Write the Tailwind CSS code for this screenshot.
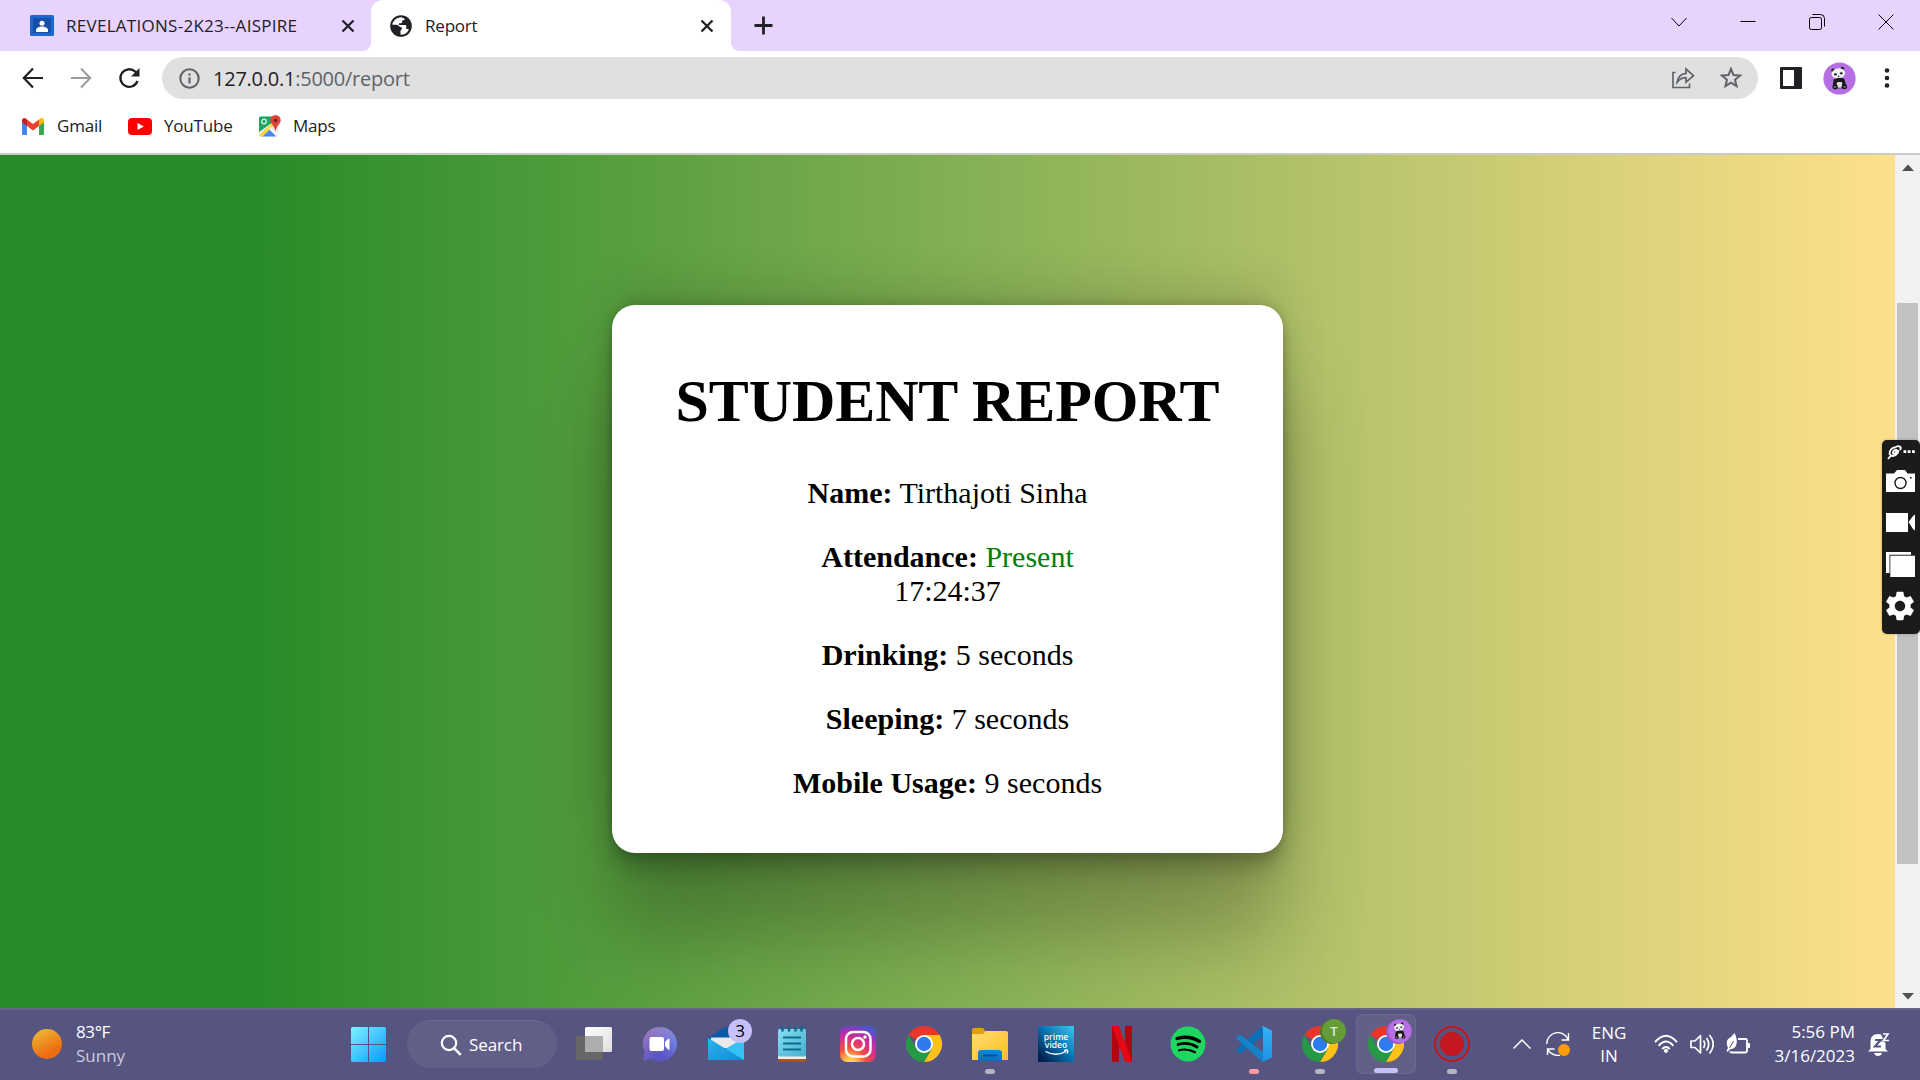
<!DOCTYPE html>
<html lang="en">
<head>
<meta charset="utf-8">
<title>Report</title>
<script src="https://cdn.jsdelivr.net/npm/@tailwindcss/browser@4"></script>
</head>
<body class="w-[1920px] h-[1080px] overflow-hidden flex flex-col bg-white font-['Open_Sans',sans-serif] text-[#202124]">

<svg class="absolute w-0 h-0" aria-hidden="true">
  <defs>
    <linearGradient id="sun" x1="0.2" y1="0" x2="0.7" y2="1"><stop offset="0" stop-color="#edba35"/><stop offset="0.8" stop-color="#ee6c10"/></linearGradient>
    <linearGradient id="win" x1="0" y1="0" x2="1" y2="1"><stop offset="0" stop-color="#7cf3ff"/><stop offset="1" stop-color="#0a97ff"/></linearGradient>
    <linearGradient id="chat" x1="0" y1="1" x2="1" y2="0"><stop offset="0.35" stop-color="#5b54c4"/><stop offset="0.65" stop-color="#6b72d8"/><stop offset="1" stop-color="#7aa0f0"/></linearGradient>
    <linearGradient id="chat2" x1="0" y1="0" x2="0.6" y2="0.7"><stop offset="0" stop-color="#a77fb8"/><stop offset="1" stop-color="#a77fb8" stop-opacity="0"/></linearGradient>
    <linearGradient id="mailB" x1="0" y1="0" x2="1" y2="1"><stop offset="0" stop-color="#2ab5ee"/><stop offset="1" stop-color="#1488d8"/></linearGradient>
    <linearGradient id="note" x1="0" y1="0" x2="1" y2="1"><stop offset="0" stop-color="#86dff5"/><stop offset="1" stop-color="#45aecd"/></linearGradient>
    <radialGradient id="ig" cx="0.28" cy="1.05" r="1.1"><stop offset="0" stop-color="#ffdd70"/><stop offset="0.15" stop-color="#fec053"/><stop offset="0.4" stop-color="#f5503f"/><stop offset="0.65" stop-color="#d62f8a"/><stop offset="0.85" stop-color="#a030b8"/><stop offset="1" stop-color="#4a55d0"/></radialGradient>
    <linearGradient id="fold" x1="0" y1="0" x2="1" y2="1"><stop offset="0" stop-color="#ffdc72"/><stop offset="1" stop-color="#fdbf1f"/></linearGradient>
    <linearGradient id="foldB" x1="0" y1="0" x2="0" y2="1"><stop offset="0" stop-color="#1587d8"/><stop offset="1" stop-color="#0d6cbd"/></linearGradient>
    <linearGradient id="prime" x1="0" y1="1" x2="1" y2="0"><stop offset="0.1" stop-color="#01224f"/><stop offset="0.55" stop-color="#0878b5"/><stop offset="1" stop-color="#37cbf0"/></linearGradient>
    <linearGradient id="tv" x1="0" y1="0" x2="1" y2="1"><stop offset="0" stop-color="#ffffff"/><stop offset="1" stop-color="#dedede"/></linearGradient>
    <linearGradient id="vs" x1="0" y1="0" x2="0" y2="1"><stop offset="0" stop-color="#35b2f5"/><stop offset="1" stop-color="#1d93e6"/></linearGradient>
    <symbol id="chrome" viewBox="0 0 36 36">
      <path d="M18 18 L2.4 9 A18 18 0 0 1 33.6 9 Z" fill="#e8362b"/>
      <path d="M18 9 H33.6 A18 18 0 0 1 18 36 L25.8 22.5 Z" fill="#fcc217"/>
      <path d="M2.4 9 A18 18 0 0 0 18 36 L25.8 22.5 L10.2 22.5 Z" fill="#279845"/>
      <circle cx="18" cy="18" r="9" fill="#fff"/><circle cx="18" cy="18" r="7.2" fill="#2f7bee"/>
    </symbol>
    <symbol id="panda" viewBox="0 0 34 34">
      <circle cx="17" cy="17" r="16.6" fill="#b66fe3"/>
      <circle cx="10.5" cy="8.6" r="2" fill="#222"/><circle cx="20" cy="6.8" r="1.9" fill="#222"/>
      <ellipse cx="15.8" cy="11.8" rx="7" ry="5.2" fill="#f1f1f1" transform="rotate(-10 15.8 11.8)"/>
      <ellipse cx="12.8" cy="12.8" rx="1.6" ry="1.1" fill="#222"/><ellipse cx="18.8" cy="11.7" rx="1.6" ry="1.1" fill="#222"/>
      <circle cx="16" cy="14.6" r=".8" fill="#222"/>
      <path d="M11 18 Q17 14.5 22 17.5 L23.8 24 L21.5 27 H12 L10.2 23 Z" fill="#191919"/>
      <rect x="14.2" y="20.5" width="5.6" height="6" rx="1.5" fill="#dedede"/>
      <circle cx="12.5" cy="25.5" r="2.7" fill="#151515"/><circle cx="22" cy="25.3" r="2.7" fill="#151515"/>
      <circle cx="12.3" cy="25.8" r="1" fill="#999"/><circle cx="22.2" cy="25.6" r="1" fill="#999"/>
    </symbol>
  </defs>
</svg>

<!-- Tab strip -->
<header class="h-[51px] shrink-0 flex bg-[#e8d3ff]">
  <div class="w-[371px] h-full flex items-center pl-[30px] pr-[16px]">
    <svg class="w-6 h-[22px]" viewBox="0 0 24 22"><rect width="24" height="21" rx="1.5" fill="#1b67d3"/><rect x="3" y="3" width="18" height="15" fill="#184fa8"/><circle cx="12" cy="8.2" r="2.5" fill="#fff"/><path d="M6 17v-1.8c0-2.2 3.5-3.6 6-3.6s6 1.4 6 3.6V17z" fill="#fff"/></svg>
    <span class="ml-[12px] text-[17px] leading-6 tracking-[0.28px] whitespace-nowrap">REVELATIONS-2K23--AISPIRE</span>
    <svg class="ml-auto w-[14px] h-[14px]" viewBox="0 0 14 14"><path d="M1.5 1.5l11 11M12.5 1.5l-11 11" stroke="#202124" stroke-width="2.3" fill="none"/></svg>
  </div>
  <div class="relative w-[360px] h-full flex items-center pl-[19px] pr-[17px] bg-white rounded-t-[12px]">
    <svg class="absolute -left-[9px] bottom-0 w-[9px] h-[10px]" viewBox="0 0 9 10"><path d="M9 0v10H0C6 10 9 6 9 0z" fill="#fff"/></svg>
    <svg class="absolute -right-[9px] bottom-0 w-[9px] h-[10px]" viewBox="0 0 9 10"><path d="M0 0v10h9C3 10 0 6 0 0z" fill="#fff"/></svg>
    <svg class="w-[22px] h-[22px]" viewBox="0 0 22 22"><circle cx="11" cy="11" r="9.8" fill="#fff" stroke="#202124" stroke-width="2"/><path d="M12 1.5c5.500 .3 9 4.500 9 9.500 0 1.500-.3 3-.9 4-1-.2-1.300-1.100-2.600-1.100h-1.200v-2.600c0-.8-.6-1.300-1.300-1.300H9V8.200h2c.7 0 1.200-.5 1.200-1.200V5.300h1.600c.7 0 1-.6.800-1.200C14.200 3 12.500 3.200 12 1.500z" fill="#202124"/><path d="M1.600 9.600L3 9.800l3 0c2 0 3 1.200 3.600 2 .6.700 2.400.3 2.400 1.800 0 1.200-1.500 1.200-1.500 2.500v4.500C5 20.500 1 16 1.600 9.600z" fill="#202124"/></svg>
    <span class="ml-[13px] text-[17px] leading-6 tracking-[-0.2px]">Report</span>
    <svg class="ml-auto w-[14px] h-[14px]" viewBox="0 0 14 14"><path d="M1.500 1.500l11 11M12.500 1.500l-11 11" stroke="#202124" stroke-width="2.300" fill="none"/></svg>
  </div>
  <div class="flex items-center pl-[23px]">
    <svg class="w-[19px] h-[19px]" viewBox="0 0 19 19"><path d="M9.500 .5v18M.5 9.500h18" stroke="#202124" stroke-width="2.800"/></svg>
  </div>
  <div class="ml-auto flex h-[43px] items-center">
    <div class="w-[69px] flex justify-center"><svg class="w-[16px] h-[16px]" viewBox="0 0 16 16"><path d="M.5 4l7.500 8L15.500 4" fill="none" stroke="#000" stroke-width="1"/></svg></div>
    <div class="w-[69px] flex justify-center"><svg class="w-[16px] h-[16px]" viewBox="0 0 16 16"><path d="M.5 7.500h15" stroke="#000" stroke-width="1"/></svg></div>
    <div class="w-[69px] flex justify-center"><svg class="w-[16px] h-[16px]" viewBox="0 0 16 16"><rect x=".5" y="3.500" width="12" height="12" rx="1.800" fill="none" stroke="#000" stroke-width="1"/><path d="M3.500 .5h8q4 0 4 4v8" fill="none" stroke="#000" stroke-width="1"/></svg></div>
    <div class="w-[69px] flex justify-center"><svg class="w-[16px] h-[16px]" viewBox="0 0 16 16"><path d="M.6.6l14.800 14.800M15.400.6L.6 15.400" stroke="#000" stroke-width="1"/></svg></div>
  </div>
</header>

<!-- Toolbar -->
<nav class="h-[54px] shrink-0 flex items-center pl-[22px]">
  <svg class="w-[22px] h-[22px]" viewBox="0 0 22 22"><path d="M21 11H2.500M11 1.500L1.800 11l9.200 9.500" fill="none" stroke="#202124" stroke-width="2.200"/></svg>
  <svg class="ml-[26px] w-[22px] h-[22px]" viewBox="0 0 22 22"><path d="M1 11h18.500M11 1.500l9.200 9.500-9.200 9.500" fill="none" stroke="#9b9b9b" stroke-width="2"/></svg>
  <svg class="ml-[26px] w-[22px] h-[22px]" viewBox="0 0 22 22"><path d="M19.500 14a8.800 8.800 0 1 1-2.200-9.300l2 2" fill="none" stroke="#202124" stroke-width="2.300"/><path d="M21.500 1v8.500H13z" fill="#202124"/></svg>
  <div class="ml-[22px] w-[1596px] h-[42px] rounded-full bg-[#e0e0e0] flex items-center pl-[17px] pr-[15px]">
    <svg class="w-[21px] h-[21px]" viewBox="0 0 21 21"><circle cx="10.500" cy="10.500" r="9.200" fill="none" stroke="#5f6368" stroke-width="2.100"/><path d="M10.500 9.300v6.200" stroke="#5f6368" stroke-width="2.200"/><rect x="9.400" y="5.400" width="2.200" height="2.200" fill="#5f6368"/></svg>
    <span class="ml-[13px] pt-[2px] text-[20px] leading-7 tracking-[-0.24px] whitespace-nowrap">127.0.0.1<span class="text-[#5f6368]">:5000/report</span></span>
    <svg class="ml-auto w-[24px] h-[22px]" viewBox="0 0 24 22"><path d="M4.500 5.500H2v15h16.500v-4" fill="none" stroke="#5f6368" stroke-width="1.700"/><path d="M6 15.500c.8-6 4-8.700 9-9.200V2l7.500 6.700L15 15.200v-4.500c-4 0-6.500 1.500-9 4.800z" fill="none" stroke="#5f6368" stroke-width="1.700"/></svg>
    <svg class="ml-[24px] w-[24px] h-[24px]" viewBox="0 0 24 24"><path d="M12 3l2.500 6.100 6.600.5-5.100 4.200 1.600 6.400-5.600-3.500-5.600 3.500L8 13.800 2.900 9.600l6.600-.5z" fill="none" stroke="#5f6368" stroke-width="2"/></svg>
  </div>
  <svg class="ml-[22px] w-[22px] h-[22px]" viewBox="0 0 22 22"><rect width="22" height="22" rx="1" fill="#202124"/><rect x="3" y="3" width="11" height="16" fill="#fff"/></svg>
  <svg class="ml-[21px] w-[33px] h-[33px]"><use href="#panda"/></svg>
  <svg class="ml-[28px] w-[6px] h-[22px]" viewBox="0 0 6 22"><circle cx="3" cy="3.500" r="2.300" fill="#202124"/><circle cx="3" cy="11" r="2.300" fill="#202124"/><circle cx="3" cy="18.500" r="2.300" fill="#202124"/></svg>
</nav>

<!-- Bookmarks bar -->
<div class="h-[50px] shrink-0 flex items-start pl-[22px] pt-[9px] border-b-2 border-[#cacaca] text-[17px] leading-6 tracking-[-0.2px]">
  <div class="flex items-center h-6 w-[106px] gap-[13px]">
    <svg class="w-[22px] h-[17px]" viewBox="0 0 22 17"><path d="M0 2.500V15.500Q0 17 1.500 17H5V7z" fill="#4285f4"/><path d="M22 2.500V15.500Q22 17 20.500 17H17V7z" fill="#34a853"/><path d="M17 1.500V8l5-3.800V2.600C22 .3 19.500-.7 17.800.7z" fill="#fbbc04"/><path d="M5 8V1.500l6 4.600 6-4.600V8l-6 4.600z" fill="#ea4335"/><path d="M0 2.600V4.200L5 8V1.500L4.200.7C2.500-.7 0 .3 0 2.600z" fill="#c5221f"/></svg>
    <span>Gmail</span>
  </div>
  <div class="flex items-center h-6 w-[131px] gap-[12px]">
    <svg class="w-[24px] h-[17px]" viewBox="0 0 24 17"><rect width="24" height="17" rx="4" fill="#f00"/><path d="M9.500 5v7l6.300-3.500z" fill="#fff"/></svg>
    <span>YouTube</span>
  </div>
  <div class="flex items-center h-6 gap-[12px]">
    <svg class="w-[22px] h-[22px]" viewBox="0 0 22 22"><rect y="1.500" width="19" height="20" rx="1.500" fill="#e8e8e8"/><path d="M0 17V3Q0 1.500 1.500 1.500H13L14 7z" fill="#1fa463"/><path d="M3 21.500l7-7.500 7.500 7.500z" fill="#4489f5"/><path d="M0 20.500L14.500 6.500l2.500 2L3.500 21.500H1z" fill="#fdd835"/><path d="M10 14l2-2 7 7v2h-2z" fill="#f4f4f4"/><circle cx="5" cy="6.500" r="2.300" fill="none" stroke="#e6f4ea" stroke-width="1.200"/><path d="M16.500 0A5.200 5.200 0 0 0 11.300 5.200c0 3.500 4 5 5.200 11 1.200-6 5.200-7.500 5.200-11A5.200 5.200 0 0 0 16.500 0z" fill="#dc4437"/><circle cx="16.500" cy="5.300" r="1.900" fill="#7c231c"/></svg>
    <span>Maps</span>
  </div>
</div>

<!-- Page viewport -->
<main class="relative h-[853px] shrink-0 flex">
  <div class="w-[1895px] h-full pt-[150px] flex items-start justify-center overflow-hidden bg-[linear-gradient(to_right,#268b28_13%,#ffe08c_100%)]">
    <section class="w-[671px] h-[548px] pt-[62px] rounded-[23px] bg-white text-center text-black font-['Liberation_Serif',serif] text-[30px] leading-[34px] shadow-[0_81px_82px_rgba(0,0,0,0.25),0_-18px_45px_rgba(0,0,0,0.12),0_6px_9px_rgba(0,0,0,0.12),0_18px_20px_rgba(0,0,0,0.17),0_-5px_8px_rgba(0,0,0,0.09)]">
      <h1 class="text-[60px] leading-[68px] font-bold mb-[41px] tracking-[-0.1px]">STUDENT REPORT</h1>
      <div class="flex flex-col gap-[30px]">
        <p><b>Name:</b> Tirthajoti Sinha</p>
        <p><b>Attendance:</b> <span class="text-[#008000]">Present</span><br>17:24:37</p>
        <p><b>Drinking:</b> 5 seconds</p>
        <p><b>Sleeping:</b> 7 seconds</p>
        <p><b>Mobile Usage:</b> 9 seconds</p>
      </div>
    </section>
  </div>
  <div class="w-[25px] h-full bg-[#f1f1f1] flex flex-col items-center">
    <svg class="mt-[9px] w-[12px] h-[7px]" viewBox="0 0 12 7"><path d="M0 7L6 .5 12 7z" fill="#505050"/></svg>
    <div class="mt-[132px] w-[21px] h-[561px] bg-[#c1c1c1]"></div>
    <svg class="mt-auto mb-[8px] w-[12px] h-[7px]" viewBox="0 0 12 7"><path d="M0 0l6 6.500L12 0z" fill="#505050"/></svg>
  </div>
  <!-- Floating capture panel -->
  <aside class="absolute right-0 top-[285px] w-[38px] h-[194px] rounded-[5px] bg-[#1b1b1b] flex flex-col items-center pt-[5px] pr-[2px] shadow-[0_0_3px_rgba(0,0,0,0.25)]">
    <svg class="w-[29px] h-[15px]" viewBox="0 0 29 15"><path d="M2 14L5 10.500M4 10C2.500 6 6 2 10 2.200M4.500 10.500c4 1.500 8-1.500 8-5.500M10 2c3-2 6 0 4 3M7 8.500c2.500.5 3.500-1 3.500-3.500-2 0-4 1-3.500 3.500z" fill="none" stroke="#fff" stroke-width="1.900"/><path d="M17.500 5.200h2.800v2.800h-2.800zM21.700 5.200h2.800v2.800h-2.800zM26 5.200h2.800v2.800H26z" fill="#fff"/></svg>
    <svg class="mt-[10px] w-[29px] h-[22px]" viewBox="0 0 29 22"><path d="M0 3.500h8L11 0h8l2.500 3.500H29V22H0z" fill="#fff"/><circle cx="14.500" cy="13" r="5.500" fill="none" stroke="#1b1b1b" stroke-width="1.400"/><rect x="24" y="7" width="1.600" height="1.600" fill="#1b1b1b"/></svg>
    <svg class="mt-[21px] w-[29px] h-[19px]" viewBox="0 0 29 19"><path d="M0 0h22v19H0zM22.500 9L27 3l2-1.500v16L27 16z" fill="#fff"/></svg>
    <svg class="mt-[20px] w-[29px] h-[25px]" viewBox="0 0 29 25"><path d="M0 0h25v2.700H3.500V21H0z" fill="#fff"/><rect x="4.300" y="3.700" width="24.700" height="21.300" fill="#fff"/></svg>
    <svg class="mt-[12px] w-[34px] h-[34px]" viewBox="0 0 24 24"><path fill="#fff" d="M19.430 12.980c.04-.32.070-.64.070-.98s-.03-.66-.07-.98l2.110-1.650c.19-.15.240-.42.120-.64l-2-3.460c-.12-.22-.39-.3-.61-.22l-2.490 1c-.52-.4-1.080-.73-1.690-.98l-.38-2.650C14.460 2.180 14.250 2 14 2h-4c-.25 0-.46.180-.49.420l-.38 2.650c-.61.250-1.170.590-1.690.98l-2.490-1c-.23-.09-.49 0-.61.220l-2 3.460c-.13.220-.07.490.12.640l2.110 1.650c-.04.320-.07.650-.07.980s.03.660.070.980l-2.110 1.650c-.19.150-.24.420-.12.640l2 3.460c.12.220.390.300.610.220l2.490-1c.52.400 1.080.730 1.690.980l.38 2.650c.03.240.240.420.490.420h4c.25 0 .46-.18.490-.42l.38-2.650c.61-.25 1.170-.59 1.690-.98l2.490 1c.23.090.490 0 .61-.22l2-3.460c.12-.22.070-.49-.12-.64l-2.110-1.650zM12 15.700c-2.040 0-3.700-1.660-3.700-3.700s1.660-3.700 3.700-3.700 3.700 1.660 3.700 3.700-1.660 3.700-3.700 3.700z"/></svg>
  </aside>
</main>

<!-- Taskbar -->
<footer class="h-[72px] shrink-0 flex items-center bg-[#565480] border-t-2 border-[#656383] pb-[2px] text-white">
  <div class="w-[335px] flex items-center pl-[32px]">
    <svg class="w-[30px] h-[31px]" viewBox="0 0 30 31"><circle cx="15" cy="15" r="15" fill="url(#sun)"/></svg>
    <div class="ml-[14px] text-[17px] leading-6">
      <div class="tracking-[-0.4px]">83°F</div>
      <div class="text-[#cccbdb]">Sunny</div>
    </div>
  </div>
  <div class="w-[72px] pl-4">
    <svg class="w-[35px] h-[35px]" viewBox="0 0 35 35"><path d="M1.500 0H17v17H0V1.500Q0 0 1.500 0zM18 0h15.500Q35 0 35 1.500V17H18zM0 18h17v17H1.500Q0 35 0 33.500zM18 18h17v15.500q0 1.500-1.500 1.500H18z" fill="url(#win)"/></svg>
  </div>
  <div class="w-[150px] h-12 rounded-full bg-[#615f87] border-t border-[#6d6b90] flex items-center pl-[33px]">
    <svg class="w-[22px] h-[22px]" viewBox="0 0 22 22"><circle cx="9" cy="9" r="7.200" fill="none" stroke="#fff" stroke-width="2.200"/><path d="M14 14.200l6 6" stroke="#fff" stroke-width="2.600" stroke-linecap="round"/></svg>
    <span class="ml-[7px] text-[17px] leading-6 tracking-[-0.1px]">Search</span>
  </div>
  <div class="ml-1 flex items-center h-[60px]">
    <div class="w-[66px] flex justify-center"><svg class="w-9 h-9" viewBox="0 0 36 36"><rect x="9" y="1" width="27" height="25" rx="1.500" fill="url(#tv)"/><rect x="0" y="10" width="27" height="24" rx="1.500" fill="#666"/><path d="M9 10h18v16H9z" fill="#adadad"/></svg></div>
    <div class="w-[66px] flex justify-center"><svg class="w-9 h-9" viewBox="0 0 36 36"><path d="M18 1a17 17 0 1 1-8.500 31.700L1 35l1.500-9.500A17 17 0 0 1 18 1z" fill="url(#chat)"/><path d="M18 1a17 17 0 1 1-8.500 31.700L1 35l1.500-9.500A17 17 0 0 1 18 1z" fill="url(#chat2)"/><rect x="7.500" y="11" width="14.500" height="14" rx="2" fill="#fff"/><path d="M23 16l3.300-3.300h1.200v11h-1.200L23 20z" fill="#fff"/></svg></div>
    <div class="relative w-[66px] flex justify-center"><svg class="w-9 h-9" viewBox="0 0 36 36"><path d="M0 12L17 1h3L36 12v8H0z" fill="#0b5aa8"/><path d="M3 11.500h31V22H3z" fill="#e9e9e9"/><path d="M0 12l18 12v10H0z" fill="#1fa2e6"/><path d="M36 12L18 22.500 10 28v6h26z" fill="#35c3f4"/><path d="M0 12l36 22H0z" fill="url(#mailB)"/></svg>
      <span class="absolute left-[35px] -top-[7px] w-6 h-6 rounded-full bg-[#c5c0f7] text-black text-[17px] leading-6 text-center">3</span></div>
    <div class="w-[66px] flex justify-center"><svg class="w-9 h-9" viewBox="0 0 36 36"><rect x="4" y="29" width="28" height="6.500" rx="1" fill="#b4520f"/><rect x="4" y="27" width="28" height="6" fill="#f0eeee"/><rect x="4" y="3" width="28" height="27.500" rx="1.500" fill="url(#note)"/><path d="M8.500 1.500v3M15 1.500v3M21.500 1.500v3M27.500 1.500v3" stroke="#0d6b8c" stroke-width="2.600" stroke-linecap="round"/><path d="M9 11.500h18M9 17.500h18M9 23.500h18" stroke="#0a6c8e" stroke-width="2"/></svg></div>
    <div class="w-[66px] flex justify-center"><svg class="w-9 h-9" viewBox="0 0 36 36"><rect width="36" height="36" rx="7" fill="url(#ig)"/><rect x="6" y="6" width="24.500" height="24.500" rx="7" fill="none" stroke="#fff" stroke-width="2.500"/><circle cx="18" cy="18" r="6" fill="none" stroke="#fff" stroke-width="2.500"/><circle cx="25" cy="11" r="1.700" fill="#fff"/></svg></div>
    <div class="w-[66px] flex justify-center"><svg class="w-9 h-9"><use href="#chrome"/></svg></div>
    <div class="relative w-[66px] flex justify-center"><svg class="w-9 h-9" viewBox="0 0 36 36"><path d="M0 4Q0 2 2 2h9l3 3.500V12H0z" fill="#e09f0c"/><path d="M0 8h11l3-3h20q2 0 2 2v27H0z" fill="url(#fold)"/><path d="M6 35v-8q0-3 3-3h18q3 0 3 3v8z" fill="url(#foldB)"/><path d="M11 29.500h14" stroke="#0a4f90" stroke-width="1.800"/></svg>
      <span class="absolute left-[28px] -bottom-[12px] w-[10px] h-[5px] rounded-full bg-[#b5b4c5]"></span></div>
    <div class="w-[66px] flex justify-center"><svg class="w-9 h-9" viewBox="0 0 36 36"><rect width="36" height="36" fill="url(#prime)"/><text x="18" y="13.500" text-anchor="middle" font-family="Open Sans" font-weight="600" font-size="8.500" fill="#fff">prime</text><text x="18" y="21.700" text-anchor="middle" font-family="Open Sans" font-weight="600" font-size="8.500" fill="#fff">video</text><path d="M7.500 25.500q10.500 5.500 20.500 0M29 27.500q1-2 .5-3.300-1.500-.5-3.500.5" fill="none" stroke="#fff" stroke-width="1.400"/></svg></div>
    <div class="w-[66px] flex justify-center"><svg class="w-9 h-9" viewBox="0 0 36 36"><path d="M8 0h7v35.500L8 36z" fill="#b20710"/><path d="M21 0h7v36l-7-.5z" fill="#b20710"/><path d="M8 0h7l13 36-7.200-.6z" fill="#e50914"/></svg></div>
    <div class="w-[66px] flex justify-center"><svg class="w-9 h-9" viewBox="0 0 36 36"><circle cx="18" cy="18" r="17.500" fill="#1ed760"/><path d="M7 12.500q12-3.500 22.500 2.800" fill="none" stroke="#000" stroke-width="3.300" stroke-linecap="round"/><path d="M8 18.500q10-3 19 2.500" fill="none" stroke="#000" stroke-width="2.700" stroke-linecap="round"/><path d="M9 24.300q8.500-2.300 16 2" fill="none" stroke="#000" stroke-width="2.200" stroke-linecap="round"/></svg></div>
    <div class="relative w-[66px] flex justify-center"><svg class="w-9 h-9" viewBox="0 0 36 36"><path d="M26.500 0L1 23q-1 1 0 2l1.500 1.700q1.200 1 2.500 0L27 10z" fill="#0a71b8"/><path d="M26.500 36L1 13q-1-1 0-2l1.500-1.700q1.200-1 2.500 0L27 26z" fill="#1583cb"/><path d="M26.500 0L36 4.500v27L26.500 36Q26 35 27 33V3Q26 1 26.500 0z" fill="url(#vs)"/></svg>
      <span class="absolute left-[28px] -bottom-[12px] w-[10px] h-[5px] rounded-full bg-[#ff99a4]"></span></div>
    <div class="relative w-[66px] flex justify-center"><svg class="w-9 h-9"><use href="#chrome"/></svg>
      <span class="absolute left-[33px] -top-[6px] w-[24px] h-[24px] rounded-full bg-[#4d7a29]"></span>
      <span class="absolute left-[35px] -top-[7px] w-[24px] h-[24px] rounded-full bg-[#659c35] text-[#e0ecd5] text-[13px] leading-6 text-center font-semibold">T</span>
      <span class="absolute left-[28px] -bottom-[12px] w-[10px] h-[5px] rounded-full bg-[#b5b4c5]"></span></div>
    <div class="w-[66px] h-full flex justify-center">
      <div class="relative w-[60px] h-[60px] rounded-[6px] bg-[#626087] border border-[#6b698f] flex items-center justify-center"><svg class="w-9 h-9"><use href="#chrome"/></svg>
      <span class="absolute left-[29px] top-[5px] w-[24px] h-[24px] rounded-full bg-[#9a55c8]"></span>
      <svg class="absolute left-[31px] top-[4px] w-6 h-6"><use href="#panda"/></svg>
      <span class="absolute left-[17px] bottom-0 w-[24px] h-[5px] rounded-full bg-[#c5c0f7]"></span></div></div>
    <div class="relative w-[66px] flex justify-center"><svg class="w-9 h-9" viewBox="0 0 36 36"><circle cx="18" cy="18" r="17" fill="none" stroke="#c5171f" stroke-width="2"/><circle cx="18" cy="18" r="12" fill="#c5171f"/></svg>
      <span class="absolute left-[28px] -bottom-[12px] w-[10px] h-[5px] rounded-full bg-[#b5b4c5]"></span></div>
  </div>
  <div class="ml-[19px] flex items-center text-[17px] leading-6">
    <div class="w-9 flex justify-center"><svg class="w-[18px] h-[10px]" viewBox="0 0 18 10"><path d="M.5 9.500L9 1l8.500 8.500" fill="none" stroke="#fff" stroke-width="1.500"/></svg></div>
    <div class="w-9 flex justify-center"><svg class="w-6 h-6" viewBox="0 0 24 24"><path d="M.8 12A11 11 0 0 1 22 7.500M22.500 1v7h-7M1.500 23v-6h7M1.500 17.500Q6 24 14 23.500" fill="none" stroke="#fff" stroke-width="1.400"/><circle cx="18" cy="18" r="6" fill="#ff9c0a"/></svg></div>
    <div class="w-[66px] text-center leading-[23px]">ENG<br>IN</div>
    <div class="ml-[6px] w-9 flex justify-center"><svg class="w-6 h-5" viewBox="0 0 24 20"><path d="M1 8.200q11-13 22 0M4.600 11.800q7.400-8.500 14.800 0M8.200 15q3.800-4 7.600 0" fill="none" stroke="#fff" stroke-width="1.900"/><circle cx="12" cy="16.800" r="2.100" fill="#fff"/></svg></div>
    <div class="w-9 flex justify-center"><svg class="w-6 h-6" viewBox="0 0 24 24"><path d="M1 9v6.500h4L10.500 21V3.500L5 9z" fill="none" stroke="#fff" stroke-width="1.700" stroke-linejoin="round"/><path d="M13.500 8.500q2.500 3.700 0 7.500M16.500 6q4.500 6.200 0 12.500M19.500 3q7.500 9 0 18.500" fill="none" stroke="#fff" stroke-width="1.700"/></svg></div>
    <div class="w-9 flex justify-center"><svg class="w-6 h-6" viewBox="0 0 24 24"><path d="M12 7h7.500q1.500 0 1.500 1.500v10q0 2-2 2H6q-1.500 0-2-1" fill="none" stroke="#fff" stroke-width="1.800"/><rect x="21.500" y="11" width="2.500" height="5" rx="1" fill="#fff"/><path d="M8.500 1C10 4 11.500 8 10.500 12q-1 5-6 5L1.500 20 .5 18.500 2 16C-1 9 2 6.500 5 5z" fill="#fff"/><path d="M3.500 16L7.500 9" stroke="#565480" stroke-width="1"/></svg></div>
    <div class="w-[99px] text-right whitespace-nowrap">5:56 PM<br>3/16/2023</div>
    <div class="ml-[6px] w-9 flex justify-center"><svg class="w-[22px] h-6" viewBox="0 0 22 24"><path d="M2.500 17V9.500Q2.500 2 10 2t7.500 7.500V17l2.500 2.500H0z" fill="#fff"/><path d="M6 21h8q-1 3-4 3t-4-3z" fill="#fff"/><path d="M12 0h10v11h-5z" fill="#565480"/><path d="M7 8h5.500L7 14.500h6M14.500 2h5.500L15 8.500h5.500" fill="none" stroke="#565480" stroke-width="2.200"/><path d="M15 2h5L15.500 8.500h5.500" fill="none" stroke="#fff" stroke-width="1.700"/></svg></div>
  </div>
</footer>
</body>
</html>
